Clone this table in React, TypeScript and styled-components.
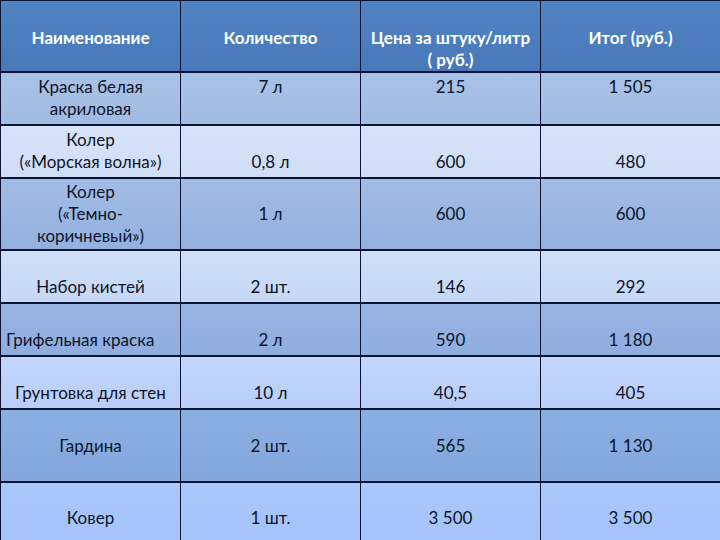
import styled, { createGlobalStyle } from "styled-components";

const GlobalStyle = createGlobalStyle`
  html, body {
    margin: 0;
    padding: 0;
    background: #ffffff;
    overflow: hidden;
  }
`;

const LINE = "#0b1433";

const Table = styled.div`
  width: 720px;
  height: 540px;
  overflow: hidden;
  border-top: 1px solid ${LINE};
  font-family: Lato, "Open Sans", "Liberation Sans", sans-serif;
`;

const Row = styled.div<{ $h: number; $top: string; $bottom: string }>`
  display: grid;
  grid-template-columns: repeat(4, 180px);
  height: ${(p) => p.$h}px;
  box-sizing: border-box;
  border-bottom: 2px solid ${LINE};
  background: linear-gradient(180deg, ${(p) => p.$top}, ${(p) => p.$bottom});
`;

type VAlign = "top" | "middle" | "bottom";

const Cell = styled.div<{ $v: VAlign; $left?: boolean }>`
  display: flex;
  flex-direction: column;
  box-sizing: border-box;
  border-left: 1px solid ${LINE};
  justify-content: ${(p) =>
    p.$v === "top" ? "flex-start" : p.$v === "bottom" ? "flex-end" : "center"};
  align-items: ${(p) => (p.$left ? "flex-start" : "center")};
  padding: ${(p) => (p.$v === "top" ? "3px" : "0")} 4px
    ${(p) => (p.$v === "bottom" ? "4px" : "0")} ${(p) => (p.$left ? "5px" : "4px")};
  text-align: center;
  font-size: 17px;
  line-height: 22px;
  color: #0d1428;
  white-space: nowrap;
`;

const HeadCell = styled.div`
  display: flex;
  flex-direction: column;
  align-items: center;
  box-sizing: border-box;
  border-left: 1px solid ${LINE};
  padding-top: 26px;
  font-size: 17px;
  font-weight: 700;
  line-height: 22px;
  color: #ffffff;
  text-align: center;
  white-space: nowrap;
`;

type Item = {
  name: string[];
  qty: string;
  price: string;
  total: string;
  h: number;
  v: VAlign;
  top: string;
  bottom: string;
  left?: boolean;
};

const items: Item[] = [
  { name: ["Краска белая", "акриловая"], qty: "7 л", price: "215", total: "1 505", h: 53, v: "top", top: "#a9c2e7", bottom: "#a1bbe2" },
  { name: ["Колер", "(«Морская волна»)"], qty: "0,8 л", price: "600", total: "480", h: 53, v: "bottom", top: "#d6e3f9", bottom: "#d0ddf6" },
  { name: ["Колер", "(«Темно-", "коричневый»)"], qty: "1 л", price: "600", total: "600", h: 72, v: "middle", top: "#a2bce5", bottom: "#94b0de" },
  { name: ["Набор кистей"], qty: "2 шт.", price: "146", total: "292", h: 53, v: "bottom", top: "#cfdffa", bottom: "#c6d8f6" },
  { name: ["Грифельная краска"], qty: "2 л", price: "590", total: "1 180", h: 53, v: "bottom", top: "#97b4e2", bottom: "#90ade0", left: true },
  { name: ["Грунтовка для стен"], qty: "10 л", price: "40,5", total: "405", h: 53, v: "bottom", top: "#c3d7fc", bottom: "#b8cef8" },
  { name: ["Гардина"], qty: "2 шт.", price: "565", total: "1 130", h: 73, v: "middle", top: "#8db0e3", bottom: "#82a6dc" },
  { name: ["Ковер"], qty: "1 шт.", price: "3 500", total: "3 500", h: 72, v: "middle", top: "#a9c7fb", bottom: "#a4c3f9" },
];

const App = () => {
  return (
    <>
      <GlobalStyle />
      <Table>
        <Row $h={72} $top="#5183c3" $bottom="#4878b8">
          <HeadCell>Наименование</HeadCell>
          <HeadCell>Количество</HeadCell>
          <HeadCell>
            <span>Цена за штуку/литр</span>
            <span>( руб.)</span>
          </HeadCell>
          <HeadCell>Итог (руб.)</HeadCell>
        </Row>
        {items.map((it) => (
          <Row key={it.name.join(" ")} $h={it.h} $top={it.top} $bottom={it.bottom}>
            <Cell $v={it.v} $left={it.left}>
              {it.name.map((line) => (
                <span key={line}>{line}</span>
              ))}
            </Cell>
            <Cell $v={it.v}>{it.qty}</Cell>
            <Cell $v={it.v}>{it.price}</Cell>
            <Cell $v={it.v}>{it.total}</Cell>
          </Row>
        ))}
      </Table>
    </>
  );
};

export default App;
